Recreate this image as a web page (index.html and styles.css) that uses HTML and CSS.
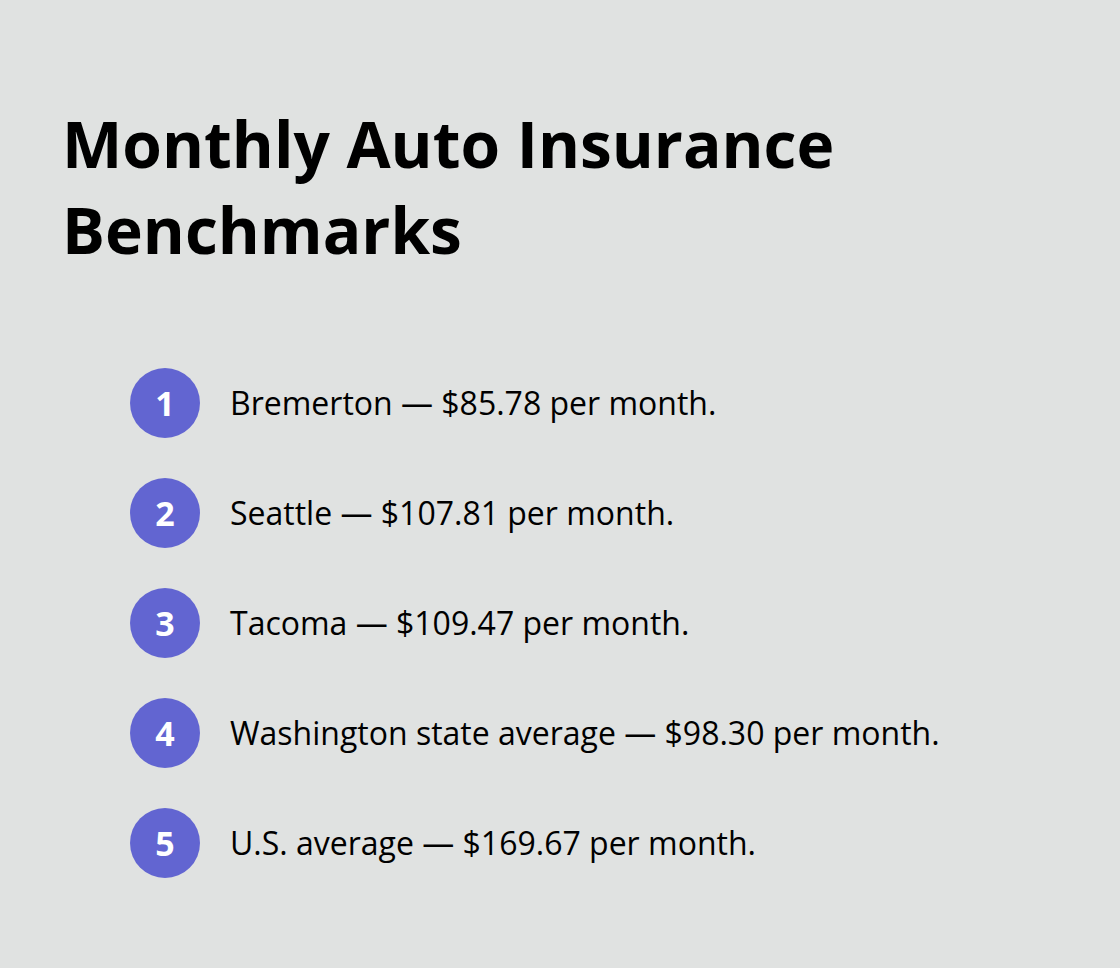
FILE: index.html
```html
<!DOCTYPE html>
<html lang="en">
<head>
    <meta charset="UTF-8">
    <meta name="viewport" content="width=device-width, initial-scale=1.0">
    <title>Monthly Auto Insurance Benchmarks</title>
    <link rel="stylesheet" href="styles.css">
</head>
<body>
    <div class="page">
        <h1>Monthly Auto Insurance Benchmarks</h1>

        <ul class="bench-list">
            <li class="bench-item"><span class="bench-num">1</span><span class="bench-text">Bremerton — $85.78 per month.</span></li>
            <li class="bench-item"><span class="bench-num">2</span><span class="bench-text">Seattle — $107.81 per month.</span></li>
            <li class="bench-item"><span class="bench-num">3</span><span class="bench-text">Tacoma — $109.47 per month.</span></li>
            <li class="bench-item"><span class="bench-num">4</span><span class="bench-text">Washington state average — $98.30 per month.</span></li>
            <li class="bench-item"><span class="bench-num">5</span><span class="bench-text">U.S. average — $169.67 per month.</span></li>
        </ul>
    </div>
</body>
</html>
```

FILE: styles.css
```css
body {
    margin: 0;
    background-color: #e0e2e1;
    color: #000000;
    font-family: "Open Sans", "Liberation Sans", sans-serif;
}

.page {
    padding: 101px 62px 0 62px;
}

h1 {
    margin: 0;
    max-width: 820px;
    font-size: 64px;
    font-weight: 700;
    line-height: 86px;
}

.bench-list {
    list-style: none;
    margin: 95px 0 0 0;
    padding: 0 0 0 68px;
    display: flex;
    flex-direction: column;
    gap: 40px;
}

.bench-item {
    display: flex;
    align-items: center;
    gap: 30px;
}

.bench-num {
    width: 70px;
    height: 70px;
    border-radius: 50%;
    background-color: #6265d1;
    color: #ffffff;
    font-size: 34px;
    font-weight: 700;
    line-height: 1;
    display: flex;
    align-items: center;
    justify-content: center;
    flex-shrink: 0;
}

.bench-text {
    font-size: 32px;
    line-height: 1.4;
}
```
